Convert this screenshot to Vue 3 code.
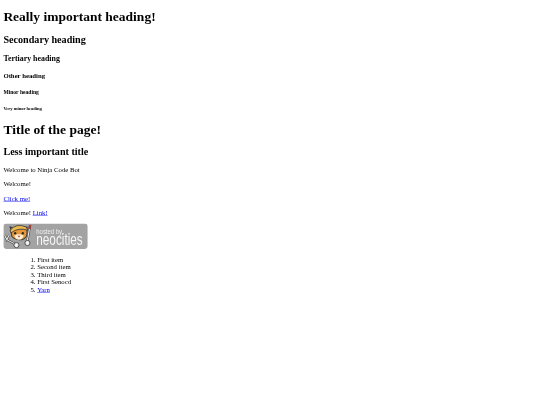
<script setup>
const items = ['First item', 'Second item', 'Third item', 'First Senocd']
</script>

<template>
  <div class="frame">
    <main class="page">
      <h1>Really important heading!</h1>
      <h2>Secondary heading</h2>
      <h3>Tertiary heading</h3>
      <h4>Other heading</h4>
      <h5>Minor heading</h5>
      <h6>Very minor heading</h6>
      <h1>Title of the page!</h1>
      <h2>Less important title</h2>
      <p>Welcome to Ninja Code Bot</p>
      <p>Welcome!</p>
      <p><a href="#">Click me!</a></p>
      <p>Welcome! <a href="#">Link!</a></p>
      <svg class="badge" viewBox="0 0 200 60" width="200" height="60">
        <rect x="0" y="0" width="200" height="60" rx="8" fill="#a3a3a3" />
        <!-- cat head -->
        <path d="M18 18 L16 8 L26 12 Q36 8 46 12 L56 8 L56 22 Q57 34 44 38 Q28 40 20 30 Z" fill="#e8963a" stroke="#3c3c3c" stroke-width="2.5" />
        <!-- helmet -->
        <path d="M16 16 Q30 -2 54 8 L58 16 Q36 8 18 22 Z" fill="#eebc4e" stroke="#3c3c3c" stroke-width="2" />
        <!-- muzzle and face -->
        <path d="M26 28 Q36 22 48 28 Q46 38 37 38 Q28 38 26 28 Z" fill="#fbeed2" />
        <circle cx="28" cy="23" r="2.8" fill="#2b2b2b" />
        <circle cx="46" cy="23" r="2.8" fill="#2b2b2b" />
        <path d="M34 29 L40 29 L37 33 Z" fill="#a83a3a" />
        <!-- wrench -->
        <path d="M3 27 L8 38 L14 27 M8 38 L27 48" stroke="#3c3c3c" stroke-width="5" fill="none" />
        <path d="M3 27 L8 38 L14 27 M8 38 L27 48" stroke="#f2f2f2" stroke-width="2.5" fill="none" />
        <circle cx="31" cy="51" r="6" fill="#f4f4f4" stroke="#3c3c3c" stroke-width="2" />
        <!-- brush -->
        <path d="M63 5 L57 40" stroke="#3c3c3c" stroke-width="5" />
        <path d="M63 5 L57 40" stroke="#f4f4f4" stroke-width="2.5" />
        <path d="M64 3 L62 13" stroke="#a83a3a" stroke-width="5" />
        <circle cx="57" cy="46" r="6" fill="#f4f4f4" stroke="#3c3c3c" stroke-width="2" />
        <text x="78" y="24" class="small" textLength="64" lengthAdjust="spacingAndGlyphs">hosted by,</text>
        <text x="78" y="50" class="big" textLength="110" lengthAdjust="spacingAndGlyphs">neocities</text>
      </svg>
      <ol>
        <li v-for="item in items" :key="item">{{ item }}</li>
        <li><a href="#">Yarn</a></li>
      </ol>
    </main>
  </div>
</template>

<style scoped>
.frame {
  width: 540px;
  height: 405px;
  overflow: hidden;
}
.page {
  display: flow-root;
  width: 1264px;
  margin: 0 8px;
  transform: scale(0.421875);
  transform-origin: -8px 0;
  font-family: "Liberation Serif", serif;
  color: #000;
  filter: blur(0.7px);
}
.badge {
  display: block;
}
.small {
  font-family: "Liberation Sans", sans-serif;
  font-size: 18px;
  fill: #f0f0f0;
}
.big {
  font-family: "Liberation Sans", sans-serif;
  font-size: 37px;
  fill: #f6f6f6;
}
ol {
  padding-left: 80px;
}
</style>

<style>
body {
  background: #fff;
}
</style>
